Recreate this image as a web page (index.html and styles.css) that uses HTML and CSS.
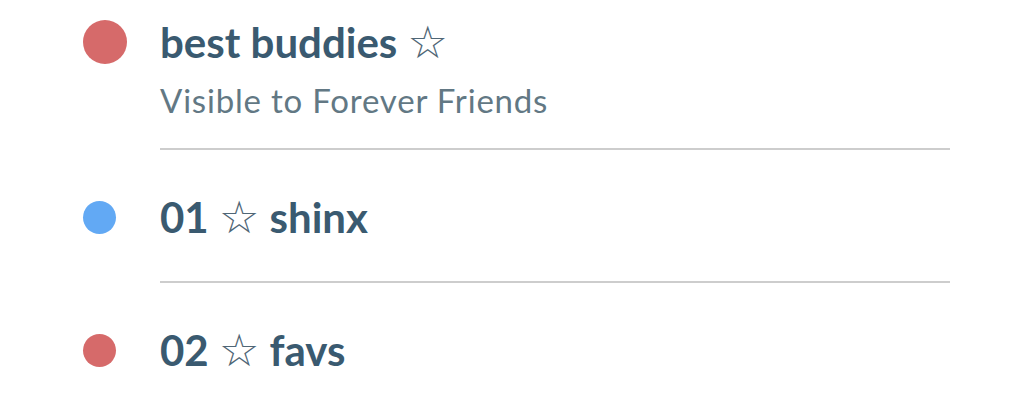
FILE: index.html
```html
<!DOCTYPE html>
<html lang="en">
<head>
    <meta charset="UTF-8">
    <meta name="viewport" content="width=device-width, initial-scale=1.0">
    <title>Lists</title>
    <link rel="stylesheet" href="styles.css">
</head>
<body>
    <div class="lists">
        <div class="item first">
            <div class="mark"><span class="dot red big"></span></div>
            <div class="info">
                <div class="name">best buddies <span class="star">☆</span></div>
                <div class="sub">Visible to Forever Friends</div>
            </div>
        </div>
        <div class="line"></div>
        <div class="item">
            <div class="mark"><span class="dot blue"></span></div>
            <div class="info">
                <div class="name">01 <span class="star">☆</span> shinx</div>
            </div>
        </div>
        <div class="line"></div>
        <div class="item">
            <div class="mark"><span class="dot red"></span></div>
            <div class="info">
                <div class="name">02 <span class="star">☆</span> favs</div>
            </div>
        </div>
    </div>
</body>
</html>
```

FILE: styles.css
```css
/* General Styling */
body {
    margin: 0;
    background: #ffffff;
    font-family: Lato, "Open Sans", sans-serif;
}

.lists {
    padding: 20px 74px 0 83px;
}

.item {
    display: flex;
    align-items: flex-start;
    padding: 43px 0 40px;
}

.item.first {
    padding: 0 0 30px;
}

.mark {
    width: 77px;
    height: 48px;
    display: flex;
    align-items: center;
    flex-shrink: 0;
}

.first .mark {
    height: 44px;
}

.dot {
    display: block;
    width: 33px;
    height: 33px;
    border-radius: 50%;
}

.dot.big {
    width: 44px;
    height: 44px;
}

.red {
    background: #d66a6a;
}

.blue {
    background: #62a9f4;
}

.name {
    font-size: 42px;
    font-weight: bold;
    line-height: 48px;
    color: #3a5a70;
}

.first .name {
    line-height: 44px;
}

.star {
    font-family: "DejaVu Sans", sans-serif;
    font-weight: normal;
    font-size: 45px;
    line-height: 1;
    color: #4f6676;
}

.sub {
    margin-top: 17px;
    font-size: 33px;
    letter-spacing: 0.8px;
    line-height: 36px;
    color: #627884;
}

.line {
    margin-left: 77px;
    height: 2px;
    background: #cdcdcd;
}
```
